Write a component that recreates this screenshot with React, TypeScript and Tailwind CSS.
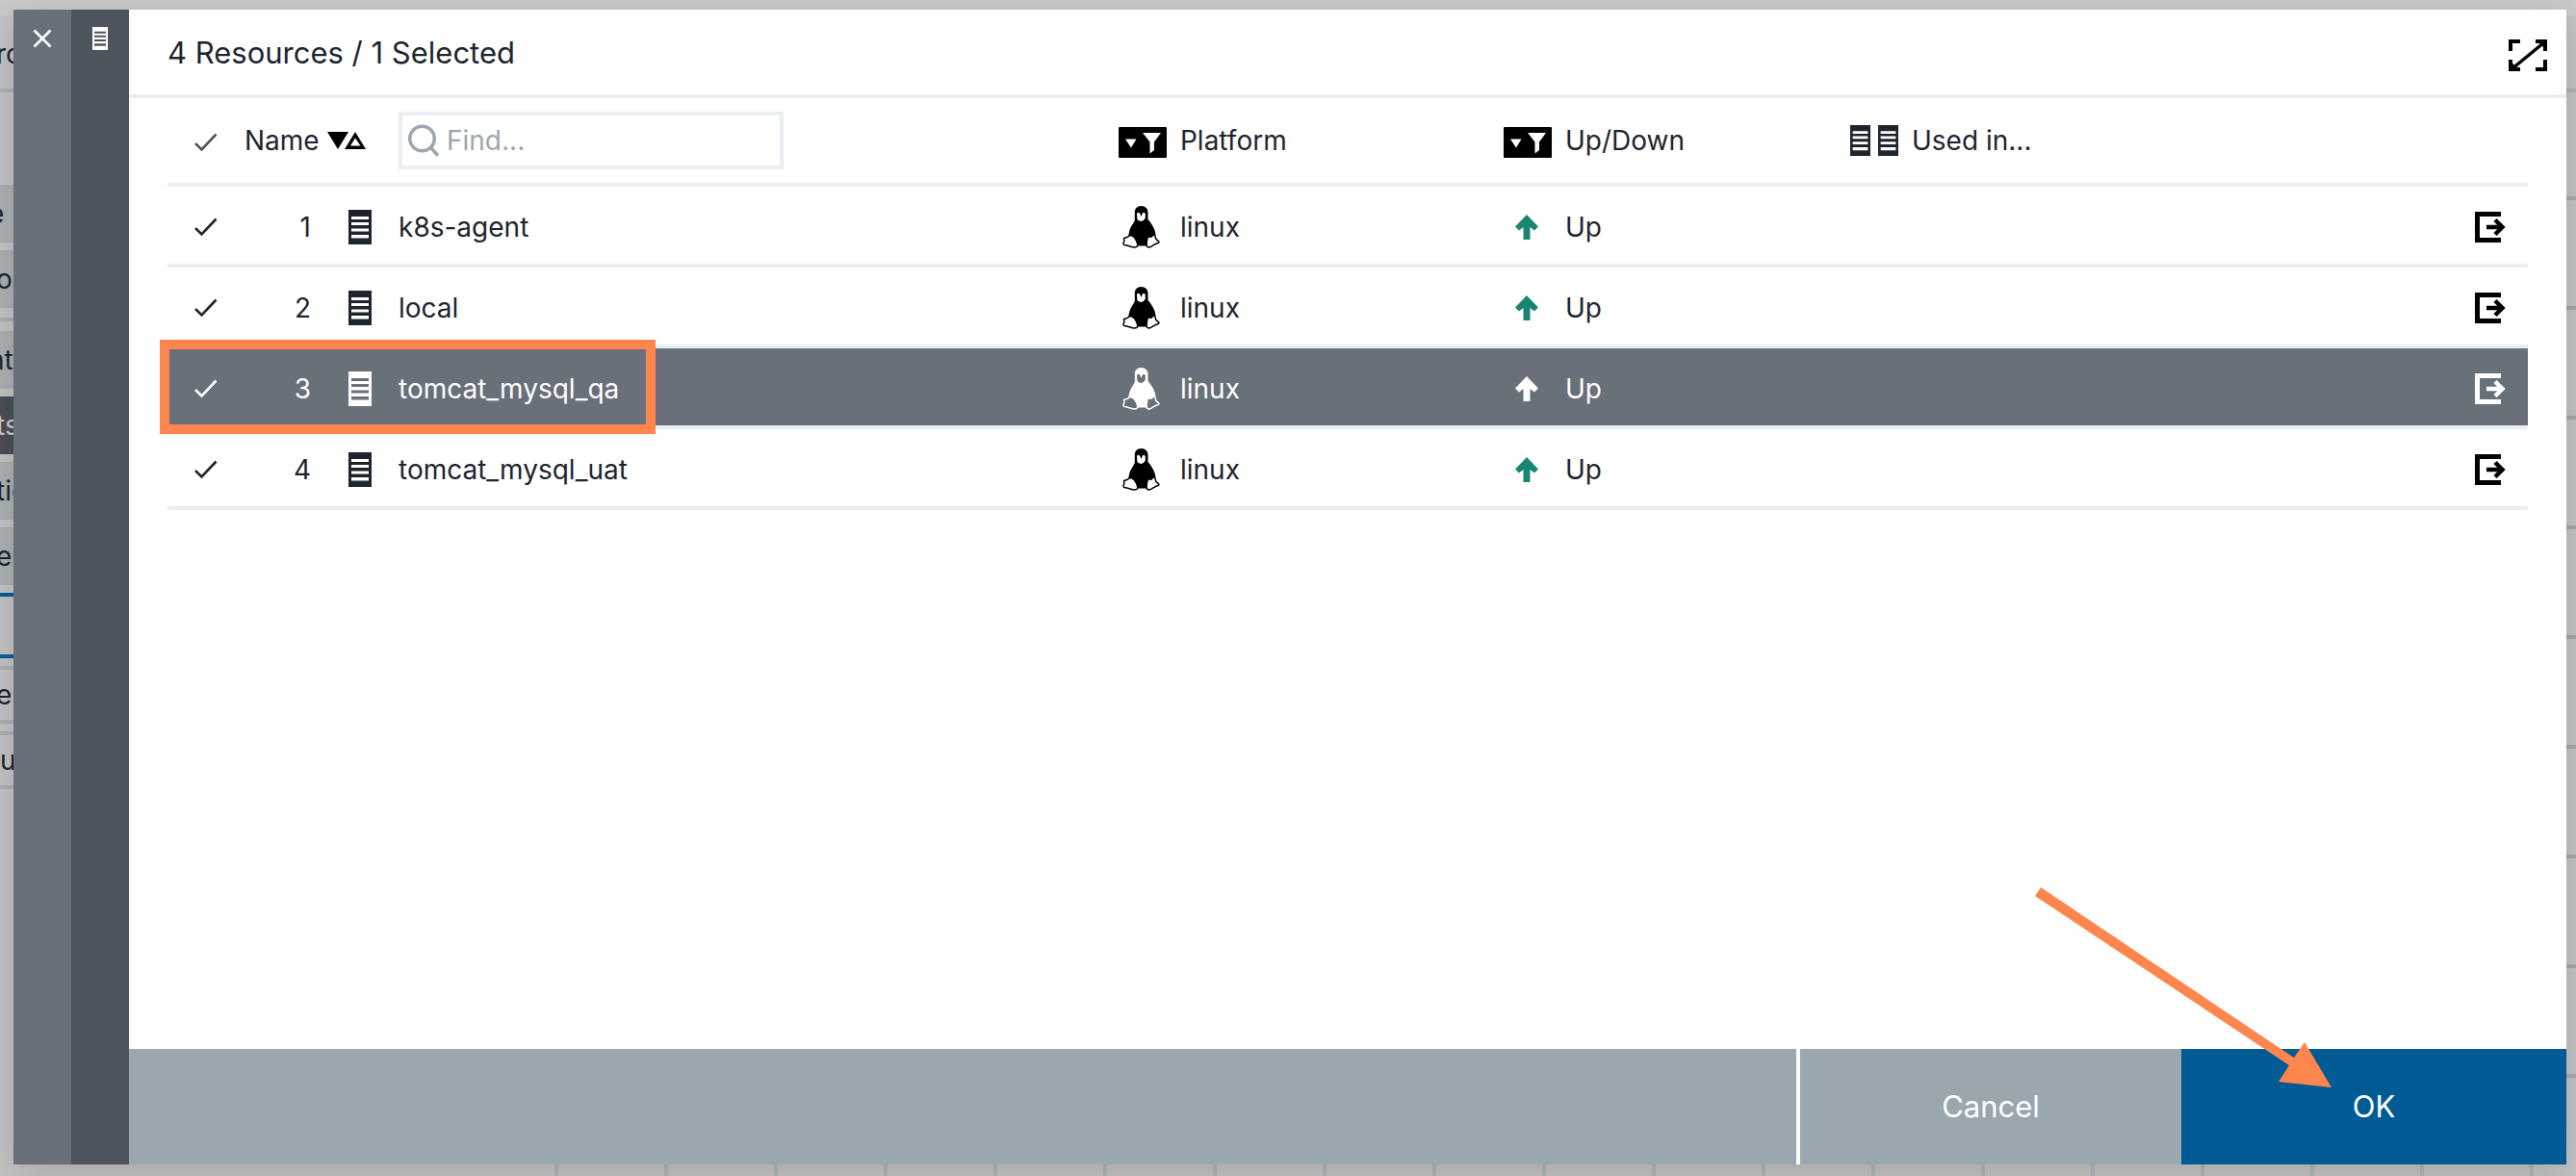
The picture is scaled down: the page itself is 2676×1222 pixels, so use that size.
import React from "react";

type Resource = { id: number; name: string; platform: string; state: string; selected?: boolean };

const resources: Resource[] = [
  { id: 1, name: "k8s-agent", platform: "linux", state: "Up" },
  { id: 2, name: "local", platform: "linux", state: "Up" },
  { id: 3, name: "tomcat_mysql_qa", platform: "linux", state: "Up", selected: true },
  { id: 4, name: "tomcat_mysql_uat", platform: "linux", state: "Up" },
];

function CheckIcon() {
  return (
    <svg className="h-6 w-6" viewBox="0 0 24 24" fill="none" stroke="currentColor" strokeWidth="2.6" aria-hidden="true">
      <path d="M1 13l6.500 6.500L22.500 3.500" />
    </svg>
  );
}

function ServerIcon({ className }: { className: string }) {
  return (
    <svg className={className} viewBox="0 0 24 36" preserveAspectRatio="none" fill="currentColor" fillRule="evenodd" aria-hidden="true">
      <path d="M0 0H24V36H0ZM3 7V10H21V7ZM3 13V16H21V13ZM3 19.500V22.500H21V19.500ZM3 26V29.500H21V26Z" />
    </svg>
  );
}

function TuxIcon() {
  return (
    <svg className="h-11 w-10" viewBox="0 0 40 44" aria-hidden="true">
      <path
        fill="currentColor"
        fillRule="evenodd"
        d="M19.500 0C15 0 12.800 3 12.800 6.500V15C11 19 7.500 22 6.500 30L10 31C13 34 15 37 16 41.500H25.500C24.500 37 25.500 34 27 31L30 32L34.500 30C34 24 30 18 26.500 14V6.500C26.500 3 24 0 19.500 0ZM15 8C16 6 17.500 6.500 18.500 8.500L19.500 11L20.500 8.500C21.500 6 23 6.500 23.800 8.500V12.500C23 14 21.500 15.500 19.500 16C17 15.500 15.500 15 15.300 13Z"
      />
      <path
        fill="none"
        stroke="currentColor"
        strokeWidth="1.5"
        strokeLinejoin="round"
        d="M7 30.500C6 33 4 33 1.500 33.500C1.500 35 2.500 36 1.500 37.500C0.500 39 1 40 2 40.500C6 41 9 42.500 12 43C14.500 43 16 42.500 15.800 40C15 36 13 33 10 31ZM27 31C28 32.500 29 32.500 30 32C31 30.500 33 29 34 31C34.500 33 34 34 36 35.500C38.500 37 38.500 38 37 38.500C33 39.500 31 42 28 43C25.500 43 25 42 25 40C25 36 25.500 34 27 31Z"
      />
    </svg>
  );
}

function UpArrowIcon() {
  return (
    <svg className="h-[26px] w-6" viewBox="0 0 24 26" fill="currentColor" aria-hidden="true">
      <path d="M12 0L24 12.500L20 16.500L15.500 13V26H8.500V13L4 16.500L0 12.500Z" />
    </svg>
  );
}

function OpenIcon() {
  return (
    <svg className="h-8 w-8" viewBox="0 0 32 32" fill="none" stroke="currentColor" aria-hidden="true">
      <path strokeWidth="5" d="M27 2.500H2.500V29.500H27" />
      <path strokeWidth="4.500" d="M12 16H28M21 8.500L28.500 16L21 23.500" />
    </svg>
  );
}

function FilterIcon() {
  return (
    <svg className="h-8 w-[50px]" viewBox="0 0 50 32" aria-hidden="true">
      <rect width="50" height="32" rx="1" fill="black" />
      <path fill="white" d="M7 12.500H18.500L13 21.500ZM25 6H44L37 15.500V24L32.500 27.500V15.500Z" />
    </svg>
  );
}

function SortIcon() {
  return (
    <svg className="h-[18px] w-10" viewBox="0 0 40 18" aria-hidden="true">
      <path fill="black" d="M0 0H22L11 18Z" />
      <path fill="black" fillRule="evenodd" d="M29 0L40 18H18ZM29 6.500L24 14.500H34.500Z" />
    </svg>
  );
}

function ExpandIcon() {
  return (
    <svg className="h-[34px] w-10" viewBox="0 0 40 34" fill="none" stroke="black" aria-hidden="true">
      <path strokeWidth="4" d="M2 12V2H12M28 2H38V12M38 21V31H28M12 31H2V21" />
      <path strokeWidth="3.5" d="M3 31L37 3" />
      <path fill="black" stroke="none" d="M30 2H38V10ZM2 23V31H11Z" />
    </svg>
  );
}

function BackgroundPage() {
  const pill = "flex h-[60px] shrink-0 items-center bg-[#abb0b2]";
  const box = "flex h-[60px] shrink-0 items-center border-y-4 border-[#adb1b4]";
  return (
    <div className="flex h-screen flex-col bg-[#c3c3c3] text-[28px]" aria-hidden="true">
      <div className="h-4 shrink-0 bg-[#cacaca]" />
      <div className="flex h-20 shrink-0 items-center border-b-4 border-[#aeb3b6] pt-1">
        <span className="-ml-1">ro</span>
      </div>
      <div className="flex min-h-0 flex-1 justify-between overflow-hidden">
        <div className="flex w-[14px] flex-col gap-2 overflow-hidden pt-24">
          <div className={pill}><span className="-ml-3">e</span></div>
          <div className={pill}><span className="-ml-1">or</span></div>
          <div className="my-0.5 h-1 shrink-0 bg-[#a9aeb0]" />
          <div className={pill}><span className="-ml-3">nt</span></div>
          <div className="flex h-[60px] shrink-0 items-center bg-[#4b4f57] text-[#cccccc]"><span className="-ml-1">ts</span></div>
          <div className={pill}><span className="-ml-1">tic</span></div>
          <div className={pill}><span className="-ml-1">er</span></div>
          <div className="h-[68px] shrink-0 border-y-4 border-[#00609c]" />
          <div className={box}><span className="-ml-1">es</span></div>
          <div className={box}>u</div>
        </div>
        <div className="flex w-5 flex-col pt-[108px]">
          {Array.from({ length: 9 }, (_, i) => (
            <div key={i} className="h-[114px] shrink-0 border-t-4 border-[#a5a9ac]" />
          ))}
        </div>
      </div>
      <div className="flex h-3 shrink-0 overflow-hidden pl-[576px]">
        {Array.from({ length: 19 }, (_, i) => (
          <div key={i} className="w-[114px] shrink-0 border-l-4 border-[#b0b5b8]" />
        ))}
      </div>
    </div>
  );
}

export default function App() {
  return (
    <div className="relative h-screen overflow-hidden font-['Inter',sans-serif] text-[#1e252e]">
      <BackgroundPage />
      <section
        role="dialog"
        aria-label="Select resources"
        className="absolute top-[10px] right-[10px] bottom-3 left-[14px] flex shadow-[0_10px_40px_rgba(0,0,0,0.15)]"
      >
        <div className="flex w-[60px] justify-center bg-[#687079] pt-5 text-white">
          <button type="button" aria-label="Close" className="h-5 w-5">
            <svg className="h-5 w-5" viewBox="0 0 20 20" fill="none" stroke="currentColor" strokeWidth="2.6" aria-hidden="true">
              <path d="M1.500 1.500L18.500 18.500M18.500 1.500L1.500 18.500" />
            </svg>
          </button>
        </div>
        <div className="flex w-[60px] justify-center bg-[#4c545d] pt-[18px] text-white">
          <ServerIcon className="h-6 w-4" />
        </div>
        <div className="relative flex flex-1 flex-col bg-white">
          <header className="flex h-[92px] items-center justify-between border-b-4 border-[#e9eff1] pr-5 pl-10">
            <h1 className="pt-0.5 text-[31px]">4 Resources / 1 Selected</h1>
            <button type="button" aria-label="Expand" className="pt-2">
              <ExpandIcon />
            </button>
          </header>
          <main className="relative flex-1 px-10">
            <table className="w-full table-fixed border-separate border-spacing-0 text-left text-[28px] [&_td]:border-b-4 [&_td]:border-[#e9eff1] [&_td]:pt-1 [&_th]:border-b-4 [&_th]:border-[#e9eff1]">
              <colgroup>
                <col className="w-20" />
                <col className="w-20" />
                <col className="w-20" />
                <col />
                <col className="w-16" />
                <col className="w-[336px]" />
                <col className="w-16" />
                <col className="w-[296px]" />
                <col className="w-[626px]" />
                <col className="w-[78px]" />
              </colgroup>
              <thead>
                <tr className="h-[92px]">
                  <th className="font-normal text-[#4c545d]">
                    <span className="flex justify-center pt-1"><CheckIcon /></span>
                  </th>
                  <th colSpan={2} className="font-normal">
                    <button type="button" className="flex items-center gap-2">
                      Name
                      <SortIcon />
                    </button>
                  </th>
                  <th className="font-normal">
                    <label className="flex h-[60px] w-[400px] items-center gap-1 border-4 border-[#e9eff1] pl-[6px] text-[#9ba7ae]">
                      <svg className="h-[34px] w-8 shrink-0" viewBox="0 0 32 34" fill="none" stroke="currentColor" strokeWidth="3.600" aria-hidden="true">
                        <circle cx="14.500" cy="15" r="12.800" />
                        <path d="M23.500 24.500L31 32.500" />
                      </svg>
                      <input aria-label="Find" placeholder="Find..." className="w-full min-w-0 pl-1 outline-none placeholder:text-[#9ba7ae]" />
                    </label>
                  </th>
                  <th><span className="block pt-1"><FilterIcon /></span></th>
                  <th className="font-normal">Platform</th>
                  <th><span className="block pt-1"><FilterIcon /></span></th>
                  <th className="font-normal">Up/Down</th>
                  <th className="font-normal" colSpan={2}>
                    <span className="flex items-center gap-2">
                      <ServerIcon className="h-8 w-[21px]" />
                      <ServerIcon className="h-8 w-[21px]" />
                      <span className="pl-1.5">Used in...</span>
                    </span>
                  </th>
                </tr>
              </thead>
              <tbody>
                {resources.map((r) => (
                  <tr key={r.id} className={r.selected ? "h-[84px] bg-[#687079] text-white" : "h-[84px]"}>
                    <td><span className="flex justify-center"><CheckIcon /></span></td>
                    <td className="pr-[11px] text-right">{r.id}</td>
                    <td><ServerIcon className="ml-7 h-9 w-6" /></td>
                    <td>{r.name}</td>
                    <td className={r.selected ? "pl-1" : "pl-1 text-black"}><TuxIcon /></td>
                    <td>{r.platform}</td>
                    <td className={r.selected ? "pl-3" : "pl-3 text-[#198673]"}><UpArrowIcon /></td>
                    <td>{r.state}</td>
                    <td />
                    <td className={r.selected ? "" : "text-black"}>
                      <button type="button" aria-label={"Open " + r.name} className="ml-[23px] block"><OpenIcon /></button>
                    </td>
                  </tr>
                ))}
              </tbody>
            </table>
            <div className="pointer-events-none absolute top-[251px] left-8 h-[98px] w-[515px] border-10 border-[#ff864f]" />
          </main>
          <footer className="flex h-[120px] bg-[#9ba7ae] text-[31px] text-white">
            <div className="flex-1" />
            <button type="button" className="w-[400px] border-l-4 border-white">Cancel</button>
            <button type="button" className="w-[400px] bg-[#005b94]">OK</button>
          </footer>
          <svg className="pointer-events-none absolute right-[244px] bottom-[80px] h-[208px] w-[308px]" viewBox="0 0 308 208" aria-hidden="true">
            <path fill="#ff864f" d="M6 0L269 177L280 161L308 208L253 202L264 185L0 9Z" />
          </svg>
        </div>
      </section>
    </div>
  );
}
